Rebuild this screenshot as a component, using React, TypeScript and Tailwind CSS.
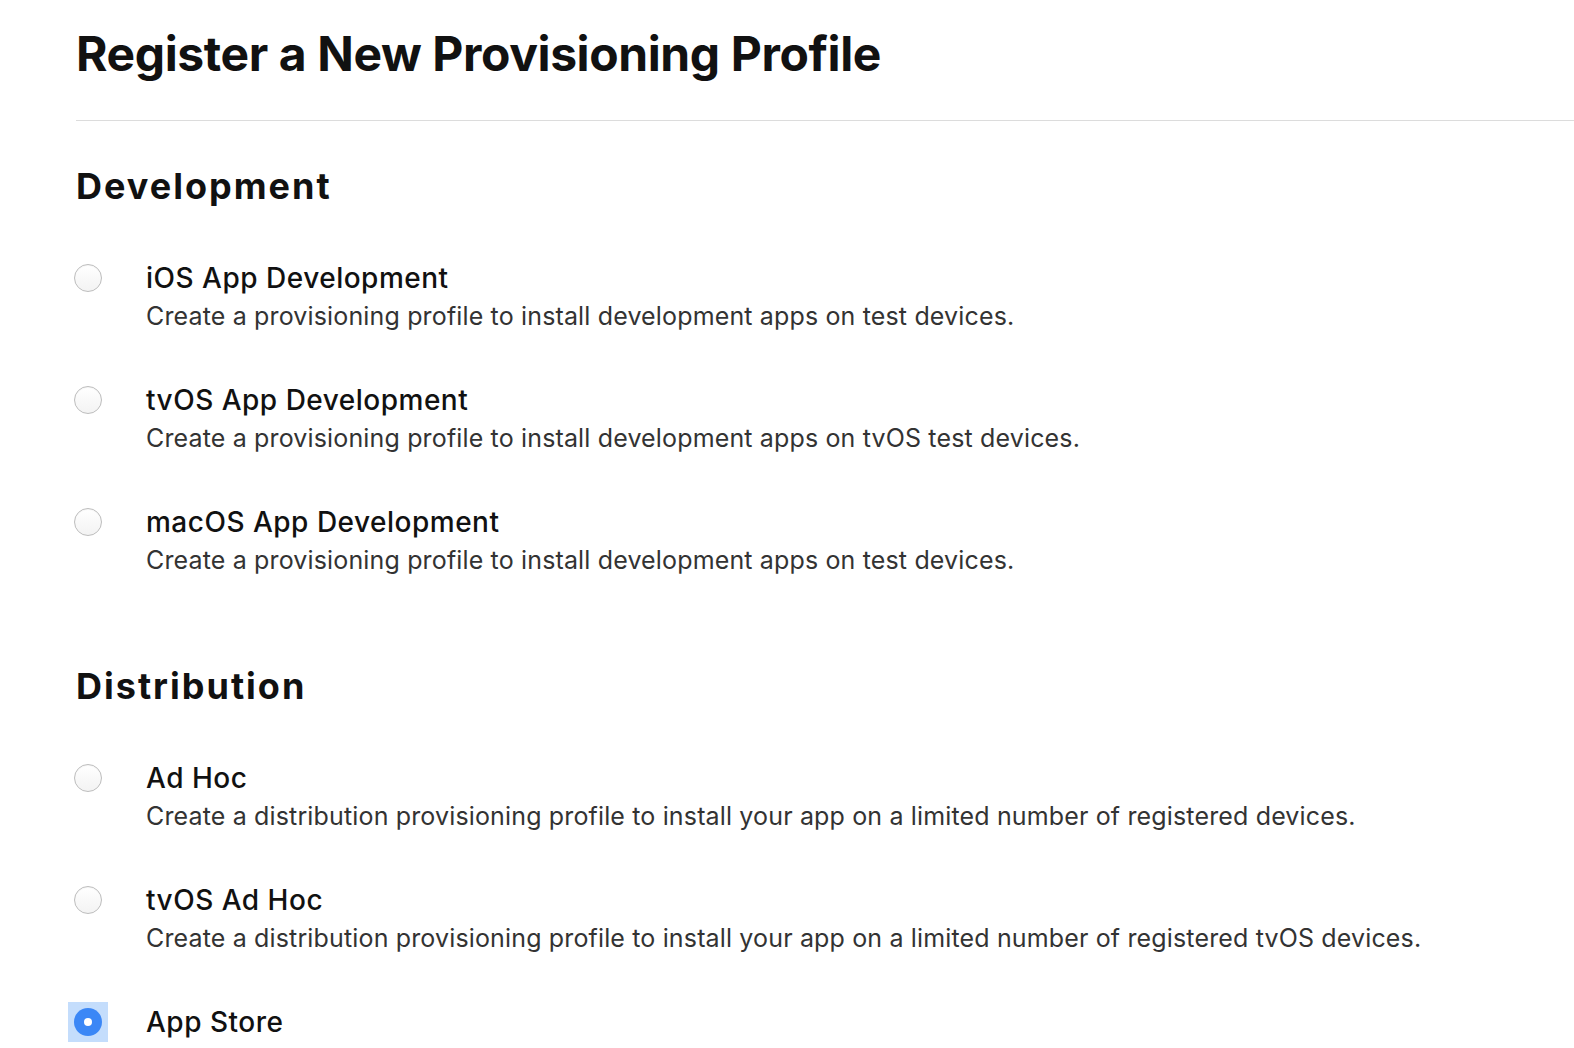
import { useState } from "react";

type Option = {
  id: string;
  title: string;
  description: string;
};

const development: Option[] = [
  {
    id: "ios-dev",
    title: "iOS App Development",
    description: "Create a provisioning profile to install development apps on test devices.",
  },
  {
    id: "tvos-dev",
    title: "tvOS App Development",
    description: "Create a provisioning profile to install development apps on tvOS test devices.",
  },
  {
    id: "macos-dev",
    title: "macOS App Development",
    description: "Create a provisioning profile to install development apps on test devices.",
  },
];

const distribution: Option[] = [
  {
    id: "adhoc",
    title: "Ad Hoc",
    description:
      "Create a distribution provisioning profile to install your app on a limited number of registered devices.",
  },
  {
    id: "tvos-adhoc",
    title: "tvOS Ad Hoc",
    description:
      "Create a distribution provisioning profile to install your app on a limited number of registered tvOS devices.",
  },
  {
    id: "appstore",
    title: "App Store",
    description: "Create a distribution provisioning profile to submit your app to the App Store.",
  },
];

function Radio({ checked }: { checked: boolean }) {
  if (checked) {
    return (
      <span className="-m-[6px] flex h-[40px] w-[40px] shrink-0 items-center justify-center bg-[#c4ddfc]">
        <span className="flex h-[28px] w-[28px] items-center justify-center rounded-full bg-[#3b87f6]">
          <span className="h-[8px] w-[8px] rounded-full bg-white" />
        </span>
      </span>
    );
  }
  return (
    <span className="h-[28px] w-[28px] shrink-0 rounded-full border border-[#bdbdbd] bg-gradient-to-b from-white to-[#f3f3f3] shadow-[inset_0_1px_1px_rgba(0,0,0,0.04)]" />
  );
}

function OptionRow({ option, checked, onSelect }: { option: Option; checked: boolean; onSelect: () => void }) {
  return (
    <label className="flex cursor-pointer items-start" onClick={onSelect}>
      <div className="-ml-[2px] mt-[3px] flex w-[28px] justify-center">
        <Radio checked={checked} />
      </div>
      <div className="ml-[44px] flex flex-col">
        <span className="text-[28px] font-medium leading-[34px] tracking-[0.5px] text-[#111111]">{option.title}</span>
        <span className="mt-[4px] text-[25px] leading-[34px] tracking-[0.15px] text-[#333333]">
          {option.description}
        </span>
      </div>
    </label>
  );
}

function Section({
  title,
  options,
  selected,
  onSelect,
  className,
}: {
  title: string;
  options: Option[];
  selected: string;
  onSelect: (id: string) => void;
  className?: string;
}) {
  return (
    <section className={className}>
      <h2 className="text-[36px] font-bold leading-[42px] tracking-[2px] text-[#111111]">{title}</h2>
      <div className="mt-[54px] flex flex-col gap-[50px]">
        {options.map((o) => (
          <OptionRow key={o.id} option={o} checked={selected === o.id} onSelect={() => onSelect(o.id)} />
        ))}
      </div>
    </section>
  );
}

export default function App() {
  const [selected, setSelected] = useState("appstore");

  return (
    <div className="h-screen overflow-hidden bg-white pl-[76px] pt-[25px] font-['Inter','Liberation_Sans',sans-serif] antialiased">
      <h1 className="text-[48px] font-bold leading-[58px] tracking-[-0.4px] text-[#111111]">
        Register a New Provisioning Profile
      </h1>
      <div className="mt-[37px] border-t border-[#dcdcdc]" />

      <Section
        className="mt-[44px]"
        title="Development"
        options={development}
        selected={selected}
        onSelect={setSelected}
      />
      <Section
        className="mt-[88px]"
        title="Distribution"
        options={distribution}
        selected={selected}
        onSelect={setSelected}
      />
    </div>
  );
}
